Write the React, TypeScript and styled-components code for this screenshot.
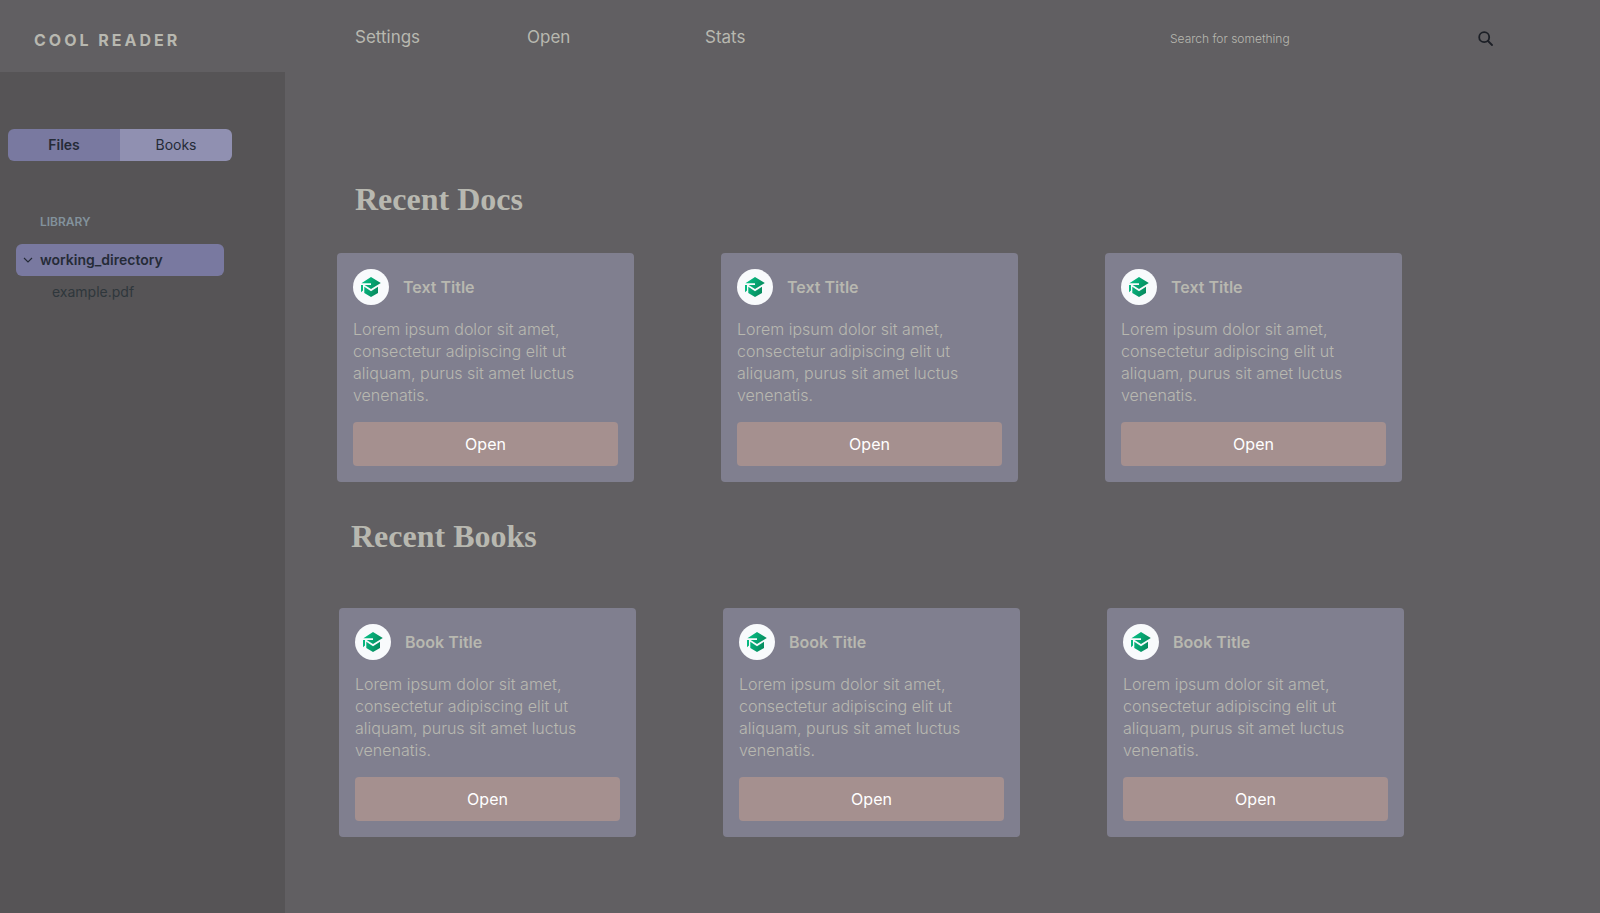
import React, { useState } from "react";
import styled, { createGlobalStyle } from "styled-components";

const color = {
  page: "#615f62",
  sidebar: "#565456",
  active: "#7979a0",
  tab: "#9090b1",
  card: "#807f8f",
  button: "#a5908f",
  text: "#b8b8b0",
  ink: "#252b37",
  faint: "#83929c",
  file: "#2f373c",
};

const GlobalStyle = createGlobalStyle`
  *, *::before, *::after { box-sizing: border-box; }
  body {
    margin: 0;
    background: ${color.page};
    color: ${color.text};
    font-family: Inter, "Liberation Sans", sans-serif;
    font-size: 16px;
  }
  button, input { font: inherit; color: inherit; border: 0; margin: 0; padding: 0; }
  button { cursor: pointer; }
  h1, h2, h3, p, ul { margin: 0; padding: 0; }
  ul { list-style: none; }
`;

const Page = styled.div`
  min-height: 100vh;
  display: flex;
  flex-direction: column;
`;

const Header = styled.header`
  height: 72px;
  display: flex;
  align-items: center;
  padding: 6px 107px 0 34px;
`;

const Brand = styled.h1`
  width: 321px;
  padding-top: 2px;
  font-size: 16px;
  line-height: 24px;
  font-weight: 700;
  letter-spacing: 3px;
`;

const Nav = styled.nav`
  display: grid;
  grid-template-columns: 172px 178px auto;
  margin-right: auto;
  padding-bottom: 4px;
`;

const NavLink = styled.a`
  color: inherit;
  text-decoration: none;
  font-size: 17px;
  line-height: 24px;
`;

const Search = styled.form`
  width: 323px;
  display: flex;
  align-items: flex-start;
`;

const SearchInput = styled.input`
  flex: 1;
  min-width: 0;
  background: transparent;
  font-size: 12px;
  line-height: 20px;
  font-weight: 300;
  outline: none;
  &::placeholder { color: ${color.text}; opacity: 1; }
`;

const SearchButton = styled.button`
  display: flex;
  padding-top: 2px;
  background: transparent;
  color: #1c1f26;
`;

const Body = styled.div`
  flex: 1;
  display: flex;
`;

const Sidebar = styled.aside`
  width: 285px;
  flex: none;
  background: ${color.sidebar};
  padding: 57px 53px 0 8px;
  font-size: 14px;
  line-height: 20px;
`;

const Tabs = styled.div`
  display: grid;
  grid-template-columns: 1fr 1fr;
  height: 32px;
  border-radius: 6px;
  overflow: hidden;
`;

const Tab = styled.button<{ $active: boolean }>`
  background: ${(p) => (p.$active ? color.active : color.tab)};
  color: ${color.ink};
  font-weight: ${(p) => (p.$active ? 600 : 400)};
`;

const Library = styled.section`
  padding: 51px 8px 0;
`;

const LibraryTitle = styled.h2`
  padding-left: 24px;
  margin-bottom: 12px;
  font-size: 12px;
  line-height: 20px;
  font-weight: 600;
  color: ${color.faint};
`;

const Folder = styled.button`
  width: 100%;
  height: 32px;
  display: flex;
  align-items: center;
  gap: 7px;
  padding-left: 7px;
  border-radius: 6px;
  background: ${color.active};
  color: ${color.ink};
  font-weight: 600;
`;

const FileLink = styled.a`
  display: block;
  padding: 6px 0 6px 36px;
  color: ${color.file};
  text-decoration: none;
`;

const Main = styled.main`
  flex: 1;
  min-width: 0;
  padding-bottom: 76px;
`;

const Section = styled.section<{ $left: number; $right: number; $top: number }>`
  padding: ${(p) => `${p.$top}px ${p.$right}px 0 ${p.$left}px`};
`;

const Heading = styled.h2<{ $indent: number; $gap: number }>`
  padding-left: ${(p) => p.$indent}px;
  margin-bottom: ${(p) => p.$gap}px;
  font-family: "Liberation Serif", serif;
  font-size: 32px;
  line-height: 40px;
  font-weight: 700;
`;

const Cards = styled.div`
  display: grid;
  grid-template-columns: repeat(3, 1fr);
  gap: 87px;
`;

const Card = styled.article`
  padding: 16px;
  border-radius: 4px;
  background: ${color.card};
`;

const CardHead = styled.div`
  display: flex;
  align-items: center;
  gap: 14px;
  margin-bottom: 13px;
`;

const Badge = styled.span`
  width: 36px;
  height: 36px;
  display: grid;
  place-items: center;
  border-radius: 50%;
  background: #f8fafc;
`;

const CardTitle = styled.h3`
  font-size: 16px;
  line-height: 24px;
  font-weight: 600;
`;

const CardText = styled.p`
  margin-bottom: 16px;
  font-size: 16px;
  line-height: 22px;
  font-weight: 300;
`;

const OpenButton = styled.button`
  width: 100%;
  height: 44px;
  border-radius: 4px;
  background: ${color.button};
  color: #fff;
  font-size: 16px;
`;

const CapIcon = () => (
  <svg width="20" height="20" viewBox="0 0 20 20" aria-hidden="true">
    <defs>
      <linearGradient id="cap" x1="0" y1="0" x2="1" y2="0.4">
        <stop offset="0" stopColor="#06c68a" />
        <stop offset="1" stopColor="#078a5e" />
      </linearGradient>
    </defs>
    <path
      fill="url(#cap)"
      d="M10 0 19.8 6 10 12 3.6 8H10V6.3H.4ZM0 8H2V13.4L0 15.2ZM3.3 9.8 10 14.2 17 9.8V16L10 20 3.3 16Z"
    />
  </svg>
);

const SearchIcon = () => (
  <svg width="15" height="15" viewBox="0 0 15 15" fill="none" stroke="currentColor" strokeWidth="1.8" strokeLinecap="round" aria-hidden="true">
    <circle cx="6.2" cy="6.2" r="5" />
    <path d="m10 10 4 4" />
  </svg>
);

const Chevron = () => (
  <svg width="10" height="10" viewBox="0 0 10 10" fill="none" stroke="currentColor" strokeWidth="1.1" aria-hidden="true">
    <path d="m1 3 4 4 4-4" />
  </svg>
);

const DocCard = ({ title }: { title: string }) => (
  <Card>
    <CardHead>
      <Badge>
        <CapIcon />
      </Badge>
      <CardTitle>{title}</CardTitle>
    </CardHead>
    <CardText>
      Lorem ipsum dolor sit amet, consectetur adipiscing elit ut aliquam, purus sit amet luctus venenatis.
    </CardText>
    <OpenButton type="button">Open</OpenButton>
  </Card>
);

const slots = [1, 2, 3];

export default function App() {
  const [tab, setTab] = useState("Files");
  return (
    <>
      <GlobalStyle />
      <Page>
        <Header>
          <Brand>COOL READER</Brand>
          <Nav>
            {["Settings", "Open", "Stats"].map((name) => (
              <NavLink key={name} href={`#${name.toLowerCase()}`}>
                {name}
              </NavLink>
            ))}
          </Nav>
          <Search role="search" onSubmit={(e) => e.preventDefault()}>
            <SearchInput type="text" aria-label="Search" placeholder="Search for something" />
            <SearchButton type="submit" aria-label="Search">
              <SearchIcon />
            </SearchButton>
          </Search>
        </Header>
        <Body>
          <Sidebar>
            <Tabs>
              {["Files", "Books"].map((name) => (
                <Tab key={name} type="button" $active={tab === name} aria-pressed={tab === name} onClick={() => setTab(name)}>
                  {name}
                </Tab>
              ))}
            </Tabs>
            <Library>
              <LibraryTitle>LIBRARY</LibraryTitle>
              <Folder type="button" aria-expanded="true">
                <Chevron />
                working_directory
              </Folder>
              <ul>
                <li>
                  <FileLink href="#example">example.pdf</FileLink>
                </li>
              </ul>
            </Library>
          </Sidebar>
          <Main>
            <Section $left={52} $right={198} $top={107}>
              <Heading $indent={18} $gap={34}>Recent Docs</Heading>
              <Cards>
                {slots.map((n) => (
                  <DocCard key={n} title="Text Title" />
                ))}
              </Cards>
            </Section>
            <Section $left={54} $right={196} $top={34}>
              <Heading $indent={12} $gap={52}>Recent Books</Heading>
              <Cards>
                {slots.map((n) => (
                  <DocCard key={n} title="Book Title" />
                ))}
              </Cards>
            </Section>
          </Main>
        </Body>
      </Page>
    </>
  );
}
